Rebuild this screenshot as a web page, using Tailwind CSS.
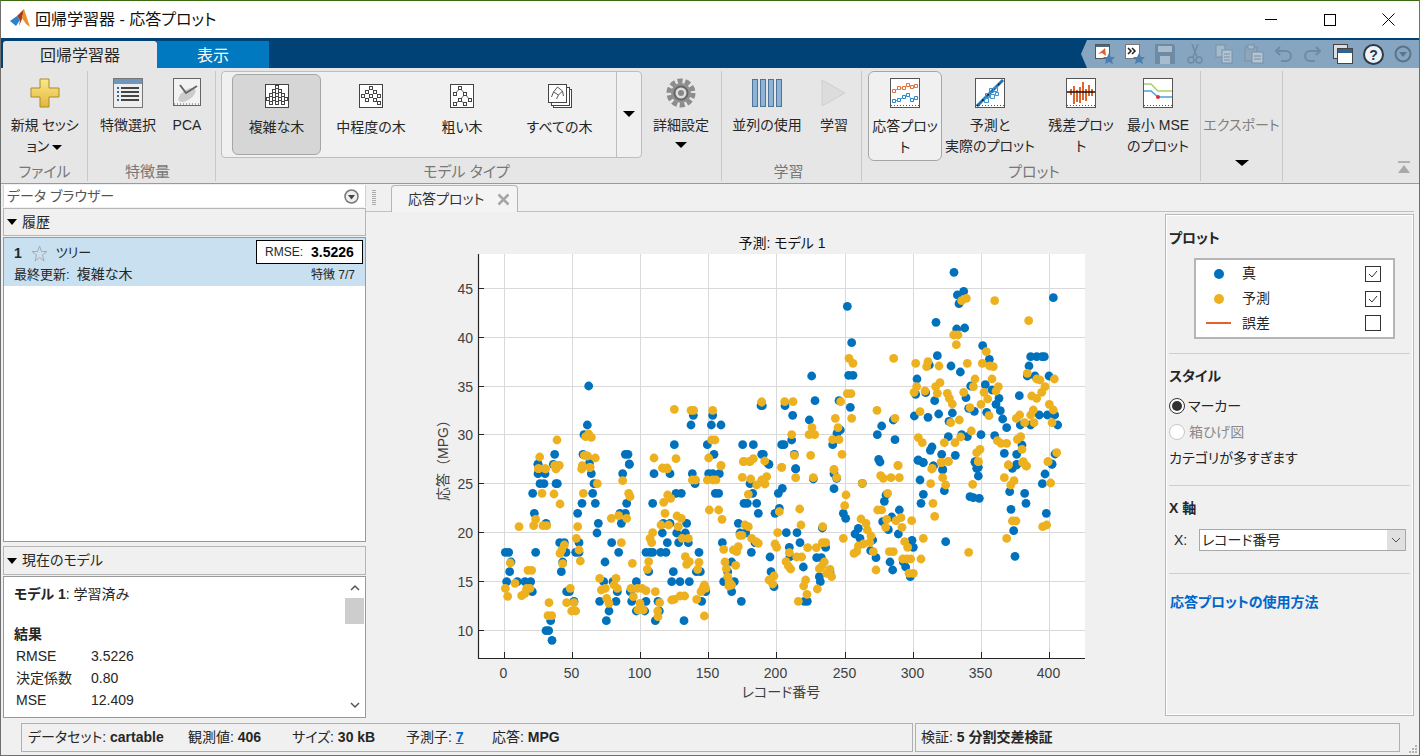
<!DOCTYPE html>
<html lang="ja">

<head>
    <meta charset="UTF-8">
    <title>回帰学習器 - 応答プロット</title>
    <script src="https://cdn.jsdelivr.net/npm/@tailwindcss/browser@4"></script>
</head>

<body class="bg-[#f0f0f0] overflow-hidden">
    <div class="w-[1420px] h-[756px] flex flex-col overflow-hidden bg-[#f0f0f0] border-t border-x border-b border-t-[#3b6a12] border-x-[#6e6e6e] border-b-[#6e6e6e] text-[14px] text-[#262626] [font-family:'Liberation_Sans','Noto_Sans_CJK_JP',sans-serif] [font-feature-settings:'palt']">

        <!-- title bar -->
        <div class="h-[37px] shrink-0 bg-white flex items-center pl-[9px]">
            <svg width="21" height="21" viewBox="0 0 21 21">
                <polygon points="0,12 7,7 10,11 6,17" fill="#2f80c8" />
                <polygon points="7,7 14,0 12,10 9,17 10,11" fill="#a83a1a" />
                <polygon points="14,0 20,18 16,15 12,9" fill="#ef8e2c" />
            </svg>
            <span class="ml-[4px] text-[16px] text-[#111]">回帰学習器 - 応答プロット</span>
            <div class="ml-auto flex items-center">
                <div class="w-[59px] flex justify-center"><div class="w-[12px] h-px bg-black"></div></div>
                <div class="w-[59px] flex justify-center"><div class="w-[12px] h-[12px] border border-black"></div></div>
                <div class="w-[59px] flex justify-center mr-[1px]">
                    <svg width="13" height="13" viewBox="0 0 13 13"><path d="M.5.5l12 12M12.5.5l-12 12" stroke="#000" fill="none" /></svg>
                </div>
            </div>
        </div>

        <!-- ribbon tabs -->
        <div class="h-[30px] shrink-0 bg-[#004275] flex items-end pl-[2px] relative">
            <div class="w-[154px] h-[27px] pt-[2px] bg-[#e6e6e6] rounded-t-[3px] text-[16px] flex items-center justify-center">回帰学習器</div>
            <div class="w-[112px] h-[27px] pt-[2px] bg-[#0079c1] text-white text-[16px] flex items-center justify-center">表示</div>
            <div class="absolute right-0 top-[2px] w-[338px] h-[28px] bg-[#86a5c0] [clip-path:polygon(6px_0,100%_0,100%_100%,6px_100%,0_50%)] flex items-center">
                <div id="quick" class="flex items-center pl-[14px] gap-[10px]">
                    <svg width="20" height="20" viewBox="0 0 20 20"><rect x=".5" y=".5" width="14" height="14" fill="#fff" stroke="#555" /><rect x="1" y="1" width="13" height="2" fill="#4a6a8a" /><polygon points="3,10 8,6 10,4 11,12 7,9" fill="#d9622b" /><polygon points="14,9 16,13 20,13 17,16 18,20 14,18 10,20 11,16 8,13 12,13" fill="#4d7eb0" /></svg>
                    <svg width="20" height="20" viewBox="0 0 20 20"><rect x=".5" y=".5" width="14" height="14" fill="#fff" stroke="#777" /><path d="M3 4l3 3-3 3M7 4l3 3-3 3" stroke="#222" stroke-width="1.500" fill="none" /><polygon points="14,9 16,13 20,13 17,16 18,20 14,18 10,20 11,16 8,13 12,13" fill="#4d7eb0" /></svg>
                    <svg width="20" height="20" viewBox="0 0 20 20"><path d="M0 0h18l2 2v18H0z" fill="#6f8aa3" /><rect x="3" y="2" width="14" height="6" fill="#a8bccd" /><rect x="5" y="12" width="10" height="8" fill="#a8bccd" /></svg>
                    <svg width="20" height="20" viewBox="0 0 20 20"><path d="M13 0L8 13M7 0l5 13" stroke="#6f8aa3" stroke-width="1.500" fill="none" /><circle cx="6" cy="16" r="3" fill="none" stroke="#6f8aa3" stroke-width="1.500" /><circle cx="14" cy="16" r="3" fill="none" stroke="#6f8aa3" stroke-width="1.500" /></svg>
                    <svg width="19" height="20" viewBox="0 0 19 20"><rect x="1" y="1" width="9" height="12" fill="#a5bacb" stroke="#7891a8" /><rect x="7" y="6" width="10" height="13" fill="#b3c4d3" stroke="#7891a8" /><path d="M9 10h6M9 13h6M9 16h6" stroke="#7891a8" /></svg>
                    <svg width="20" height="20" viewBox="0 0 20 20"><rect x="1" y="3" width="12" height="14" fill="#8ea6ba" stroke="#7891a8" /><rect x="4" y="1" width="6" height="4" fill="#a5bacb" stroke="#7891a8" /><rect x="8" y="8" width="11" height="11" fill="#b3c4d3" stroke="#7891a8" /><path d="M10 12h7M10 15h7" stroke="#7891a8" /></svg>
                    <svg width="19" height="20" viewBox="0 0 19 20"><path d="M6 3L2 7l4 4M2 7h10a5 5 0 0 1 0 10H7" stroke="#6f8aa3" stroke-width="2" fill="none" /></svg>
                    <svg width="19" height="20" viewBox="0 0 19 20"><path d="M13 3l4 4-4 4M17 7H7a5 5 0 0 0 0 10h5" stroke="#6f8aa3" stroke-width="2" fill="none" /></svg>
                    <svg class="ml-[1px]" width="20" height="20" viewBox="0 0 20 20"><rect x=".5" y=".5" width="14" height="14" fill="#ddd" stroke="#444" /><rect x="4.500" y="4.500" width="15" height="15" fill="#fff" stroke="#444" /><rect x="5" y="5" width="14" height="4" fill="#33628f" /></svg>
                    <svg width="21" height="21" viewBox="0 0 21 21"><circle cx="10.500" cy="10.500" r="9.500" fill="#eef2f6" stroke="#2d3a46" stroke-width="2" /><text x="10.500" y="15.500" text-anchor="middle" font-size="14" font-weight="700" fill="#1d3550">?</text></svg>
                    <svg width="18" height="18" viewBox="0 0 18 18"><circle cx="9" cy="9" r="7.500" fill="none" stroke="#5d7386" stroke-width="2" /><polygon points="5,7 13,7 9,12" fill="#5d7386" /></svg>
                </div>
            </div>
        </div>

        <!-- ribbon -->
        <div class="h-[115px] shrink-0 bg-[#e6e6e6] flex pt-[3px] pl-px">
            <!-- file -->
            <div class="w-[86px] flex flex-col border-r border-[#c8c8c8] h-[110px]">
                <div class="h-[92px] flex flex-col items-center">
                    <div class="h-[44px] pt-[7px]">
                        <svg width="30" height="30" viewBox="0 0 30 30">
                            <defs><linearGradient id="gold" x1="0" y1="0" x2="0" y2="1"><stop offset="0" stop-color="#fbe98a" /><stop offset="1" stop-color="#e4b638" /></linearGradient></defs>
                            <path d="M10 1h9v9h10v9H19v10h-9V19H1v-9h9z" fill="url(#gold)" stroke="#a98a2c" />
                        </svg>
                    </div>
                    <div class="leading-[21px] text-center tracking-[-0.3px]">新規 セッシ<br>ョン <span class="inline-block w-0 h-0 align-middle border-x-[5px] border-t-[5px] border-x-transparent border-t-black"></span></div>
                </div>
                <div class="h-[18px] leading-[18px] text-center text-[15px] text-[#777]">ファイル</div>
            </div>
            <!-- features -->
            <div class="w-[128px] flex flex-col border-r border-[#c8c8c8] h-[110px]">
                <div class="h-[92px] flex">
                    <div class="w-[80px] flex flex-col items-center">
                        <div class="h-[44px] pt-[7px]">
                            <svg width="30" height="30" viewBox="0 0 30 30"><rect x=".5" y=".5" width="29" height="29" fill="#eee" stroke="#777" /><rect x="1" y="1" width="28" height="5" fill="#6f96bd" /><path d="M8 10h18M8 14h18M8 18h18M8 22h18" stroke="#444" stroke-width="2" /><path d="M4 10h2M4 14h2M4 18h2M4 22h2" stroke="#2d6da8" stroke-width="2" /></svg>
                        </div>
                        <div class="leading-[21px]">特徴選択</div>
                    </div>
                    <div class="w-[38px] flex flex-col items-center">
                        <div class="h-[44px] pt-[7px]">
                            <svg width="28" height="28" viewBox="0 0 28 28"><rect x=".5" y=".5" width="27" height="27" fill="#f2f2f2" stroke="#666" /><ellipse cx="14" cy="17" rx="10" ry="5" transform="rotate(-35 14 17)" fill="#ccc" /><path d="M7 7l6 8 11-7" stroke="#666" stroke-width="2" fill="none" /><path d="M1 26h26" stroke="#666" stroke-dasharray="1 2" /></svg>
                        </div>
                        <div class="leading-[21px]">PCA</div>
                    </div>
                </div>
                <div class="h-[18px] leading-[18px] text-center text-[15px] text-[#777] -ml-[8px]">特徴量</div>
            </div>
            <!-- model type -->
            <div class="w-[506px] flex flex-col border-r border-[#c8c8c8] h-[110px]">
                <div class="h-[92px] flex">
                    <div class="ml-[5px] w-[421px] h-[87px] flex bg-[#f0f0f0] border border-[#bdbdbd] rounded-[4px] pt-[2px]">
                        <div class="ml-[10px] w-[89px] h-[81px] bg-[#d6d6d6] border border-[#a6a6a6] rounded-[6px] flex flex-col items-center pt-[9px]">
                            <svg data-nodes="12,3 9,7 15,7 6,11 12,11 18,11 3,15 9,15 15,15 21,15 6,19 12,19 18,19" width="24" height="24" viewBox="0 0 24 24"><rect x=".5" y=".5" width="23" height="23" fill="#fff" stroke="#444" /></svg>
                            <div class="mt-[9px] leading-[20px]">複雑な木</div>
                        </div>
                        <div class="w-[100px] h-[81px] flex flex-col items-center pt-[10px]">
                            <svg data-nodes="12,4 8,8 16,8 4,12 12,12 20,12 8,16 16,16 20,19" data-links="12,4 8,8 12,4 16,8 8,8 4,12 16,8 12,12 16,8 20,12" width="24" height="24" viewBox="0 0 24 24"><rect x=".5" y=".5" width="23" height="23" fill="#fff" stroke="#444" /></svg>
                            <div class="mt-[9px] leading-[20px]">中程度の木</div>
                        </div>
                        <div class="w-[82px] h-[81px] flex flex-col items-center pt-[10px]">
                            <svg data-nodes="10,4 5,10 15,10 20,16 10,16 5,20 15,20" data-links="10,4 5,10 10,4 15,10 15,10 20,16 15,10 10,16 10,16 5,20 10,16 15,20" width="24" height="24" viewBox="0 0 24 24"><rect x=".5" y=".5" width="23" height="23" fill="#fff" stroke="#444" /></svg>
                            <div class="mt-[9px] leading-[20px]">粗い木</div>
                        </div>
                        <div class="w-[113px] h-[81px] flex flex-col items-center pt-[10px]">
                            <svg width="24" height="24" viewBox="0 0 24 24"><rect x="5.500" y="5.500" width="18" height="18" fill="#fff" stroke="#444" /><rect x="3.500" y="3.500" width="18" height="18" fill="#fff" stroke="#444" /><rect x=".5" y=".5" width="18" height="18" fill="#fff" stroke="#444" /><path d="M9.500 3l-4 5 5 3 4-4zM5.500 8l-2 5M10.500 11l-2 4M14.500 7l1 5" stroke="#555" fill="none" /></svg>
                            <div class="mt-[9px] leading-[20px]">すべての木</div>
                        </div>
                        <div class="w-[25px] h-[85px] -mt-[2px] border-l border-[#bdbdbd] flex items-center justify-center">
                            <div class="w-0 h-0 border-x-[6px] border-t-[6px] border-x-transparent border-t-black mt-[-1px]"></div>
                        </div>
                    </div>
                    <div class="w-[78px] flex flex-col items-center">
                        <div class="h-[44px] pt-[7px]">
                            <svg width="30" height="30" viewBox="0 0 30 30"><circle cx="15" cy="15" r="12" fill="none" stroke="#8c8c8c" stroke-width="5" stroke-dasharray="5 2.540" /><circle cx="15" cy="15" r="10" fill="#8f8f8f" /><circle cx="15" cy="15" r="6.500" fill="#ddd" stroke="#666" stroke-width="2" /><circle cx="15" cy="15" r="3" fill="#888" /></svg>
                        </div>
                        <div class="leading-[21px]">詳細設定</div>
                        <div class="mt-[6px] w-0 h-0 border-x-[6px] border-t-[6px] border-x-transparent border-t-black"></div>
                    </div>
                </div>
                <div class="h-[18px] leading-[18px] text-center text-[15px] text-[#777] -ml-[4px]">モデル タイプ</div>
            </div>
            <!-- train -->
            <div class="w-[140px] flex flex-col border-r border-[#c8c8c8] h-[110px]">
                <div class="h-[92px] flex">
                    <div class="w-[90px] flex flex-col items-center">
                        <div class="h-[44px] pt-[8px] flex gap-[2px]">
                            <div class="w-[6px] h-[28px] bg-[#8bb4d6] border border-[#4f7396]"></div>
                            <div class="w-[6px] h-[28px] bg-[#8bb4d6] border border-[#4f7396]"></div>
                            <div class="w-[6px] h-[28px] bg-[#8bb4d6] border border-[#4f7396]"></div>
                            <div class="w-[6px] h-[28px] bg-[#8bb4d6] border border-[#4f7396]"></div>
                        </div>
                        <div class="leading-[21px]">並列の使用</div>
                    </div>
                    <div class="w-[44px] flex flex-col items-center">
                        <div class="h-[44px] pt-[8px]">
                            <svg width="26" height="28" viewBox="0 0 26 28"><polygon points="1,1 24,14 1,27" fill="#dcdcdc" stroke="#cfcfcf" /></svg>
                        </div>
                        <div class="leading-[21px]">学習</div>
                    </div>
                </div>
                <div class="h-[18px] leading-[18px] text-center text-[15px] text-[#777] -ml-[6px]">学習</div>
            </div>
            <!-- plots -->
            <div class="w-[339px] flex flex-col border-r border-[#c8c8c8] h-[110px]">
                <div class="h-[92px] flex">
                    <div class="ml-[6px] w-[74px] h-[90px] bg-[#f0f0f0] border border-[#a6a6a6] rounded-[6px] flex flex-col items-center">
                        <div class="h-[44px] pt-[6px]">
                            <svg width="30" height="30" viewBox="0 0 30 30"><rect x=".5" y=".5" width="29" height="29" fill="#fff" stroke="#555" /><path d="M4 13l5-3 5 0 4-3 4 2 4-1" stroke="#e68a62" fill="none" /><path d="M2.500 11.500h3v3h-3zM7.500 8.500h3v3h-3zM12.500 8.500h3v3h-3zM16.500 5.500h3v3h-3zM20.500 7.500h3v3h-3zM24.500 6.500h3v3h-3z" fill="#fff" stroke="#e0703e" /><path d="M4 23l5-1 5-3 4-2 4 5 4-2" stroke="#5aa2d8" fill="none" /><path d="M2.500 21.500h3v3h-3zM7.500 20.500h3v3h-3zM12.500 17.500h3v3h-3zM16.500 15.500h3v3h-3zM20.500 20.500h3v3h-3zM24.500 18.500h3v3h-3z" fill="#fff" stroke="#2e86c8" /><path d="M1 27.500h28" stroke="#555" stroke-dasharray="1 2" /></svg>
                        </div>
                        <div class="leading-[21px] text-center">応答プロッ<br>ト</div>
                    </div>
                    <div class="w-[96px] flex flex-col items-center">
                        <div class="h-[44px] pt-[7px]">
                            <svg width="30" height="30" viewBox="0 0 30 30"><rect x=".5" y=".5" width="29" height="29" fill="#fff" stroke="#555" /><path d="M2 28L28 2" stroke="#2273b5" stroke-width="3" /><path d="M2 28L28 2" stroke="#111" stroke-width="1.500" stroke-dasharray="1.500 6" /><path d="M10.500 15.500h4v4h-4zM14.500 10.500h4v4h-4zM18.500 9.500h4v4h-4zM15.500 16.500h4v4h-4zM9.500 20.500h4v4h-4zM20.500 14.500h3v3h-3z" stroke="#3b93d3" fill="none" /><path d="M1 27.500h28" stroke="#555" stroke-dasharray="1 2" /></svg>
                        </div>
                        <div class="leading-[21px] text-center whitespace-nowrap">予測と<br>実際のプロット</div>
                    </div>
                    <div class="w-[86px] flex flex-col items-center">
                        <div class="h-[44px] pt-[7px]">
                            <svg width="30" height="30" viewBox="0 0 30 30"><rect x=".5" y=".5" width="29" height="29" fill="#fff" stroke="#555" /><path d="M5 11v6M8 8v18M11 12v12M14 9v16M17 4v18M20 11v12M23 7v11M26 11v7" stroke="#e0642c" stroke-width="2" fill="none" /><path d="M1 14h28" stroke="#111" stroke-width="1.500" /><path d="M1 27.500h28" stroke="#555" stroke-dasharray="1 2" /></svg>
                        </div>
                        <div class="leading-[21px] text-center">残差プロッ<br>ト</div>
                    </div>
                    <div class="w-[68px] flex flex-col items-center">
                        <div class="h-[44px] pt-[7px]">
                            <svg width="30" height="30" viewBox="0 0 30 30"><rect x=".5" y=".5" width="29" height="29" fill="#fff" stroke="#555" /><path d="M1 6h7l7 7h14" stroke="#a5d46a" stroke-width="1.500" fill="none" /><path d="M1 13h7l7 6h14" stroke="#4aa3dc" stroke-width="1.500" fill="none" /><circle cx="15" cy="19" r="2" fill="#d6303a" /><path d="M1 27.500h28" stroke="#555" stroke-dasharray="1 2" /></svg>
                        </div>
                        <div class="leading-[21px] text-center whitespace-nowrap">最小 MSE<br>のプロット</div>
                    </div>
                </div>
                <div class="h-[18px] leading-[18px] text-center text-[15px] text-[#777] ml-[6px]">プロット</div>
            </div>
            <!-- export -->
            <div class="w-[82px] flex flex-col items-center border-r border-[#c8c8c8] h-[110px]">
                <div class="mt-[44px] leading-[21px] text-[#808080] whitespace-nowrap">エクスポート</div>
                <div class="mt-[24px] w-0 h-0 border-x-[7px] border-t-[6px] border-x-transparent border-t-black"></div>
            </div>
            <div class="flex-1 flex justify-end items-end pb-[7px] pr-[8px] h-[110px]">
                <svg width="14" height="13" viewBox="0 0 14 13"><path d="M1 1h12" stroke="#b0b0b0" stroke-width="2" /><polygon points="7,4 13,12 1,12" fill="#a8a8a8" /></svg>
            </div>
        </div>
        <div class="h-px shrink-0 bg-[#9a9a9a]"></div>

        <!-- main -->
        <div class="flex-1 min-h-0 flex">
            <!-- left column -->
            <div class="w-[365px] shrink-0 pl-[2px] pt-px flex flex-col">
                <div class="h-[22px] bg-white border-x border-[#d0d0d0] flex items-center pl-[3px] pr-[6px] text-[#555]">
                    データ ブラウザー
                    <svg class="ml-auto" width="15" height="15" viewBox="0 0 15 15"><circle cx="7.500" cy="7.500" r="6.500" fill="#eee" stroke="#777" stroke-width="1.500" /><polygon points="4,6 11,6 7.500,10.500" fill="#444" /></svg>
                </div>
                <div class="mt-px h-[28px] border border-[#b5b5b5] flex items-center pl-[3px] bg-[#f0f0f0]">
                    <span class="w-0 h-0 border-x-[5px] border-t-[6px] border-x-transparent border-t-black"></span>
                    <span class="ml-[5px]">履歴</span>
                </div>
                <div class="mt-px h-[305px] border border-[#999] bg-white">
                    <div class="h-[48px] bg-[#c8e0ef] relative px-[10px] pt-[4px]">
                        <div class="flex items-center h-[22px]">
                            <b class="font-bold">1</b>
                            <svg class="ml-[9px]" width="17" height="17" viewBox="0 0 17 17"><polygon points="8.500,1 10.500,6.500 16,6.500 11.500,10 13,16 8.500,12.500 4,16 5.500,10 1,6.500 6.500,6.500" fill="none" stroke="#aaa" /></svg>
                            <span class="ml-[8px] text-[13px]">ツリー</span>
                        </div>
                        <div class="text-[13px] leading-[22px] -mt-px">最終更新:&nbsp; <span class="text-[14px]">複雑な木</span></div>
                        <div class="absolute right-[2px] top-[2px] w-[107px] h-[24px] bg-white border border-black flex items-center pl-[8px] gap-[8px] text-[12px]">
                            RMSE: <b class="text-[14px] font-bold text-black">3.5226</b>
                        </div>
                        <div class="absolute right-[10px] top-[27px] text-[12px] leading-[20px]">特徴 7/7</div>
                    </div>
                </div>
                <div class="mt-[4px] h-[29px] border border-[#b5b5b5] flex items-center pl-[3px] bg-[#f0f0f0]">
                    <span class="w-0 h-0 border-x-[5px] border-t-[6px] border-x-transparent border-t-black"></span>
                    <span class="ml-[5px]">現在のモデル</span>
                </div>
                <div class="mt-px h-[142px] border border-[#999] bg-white flex overflow-hidden">
                    <div class="flex-1 pl-[10px] pt-[7px] text-[14px]">
                        <div class="leading-[20px]"><b class="font-bold">モデル 1</b>: 学習済み</div>
                        <div class="mt-[20px] leading-[20px] font-bold">結果</div>
                        <div class="grid grid-cols-[75px_1fr] pl-[2px] leading-[22px] mt-[1px]">
                            <span>RMSE</span><span>3.5226</span>
                            <span>決定係数</span><span>0.80</span>
                            <span>MSE</span><span>12.409</span>
                        </div>
                    </div>
                    <div class="w-[19px] mr-px flex flex-col items-center bg-white">
                        <svg class="mt-[7px]" width="10" height="7" viewBox="0 0 10 7"><path d="M1 6l4-4 4 4" stroke="#555" stroke-width="1.500" fill="none" /></svg>
                        <div class="mt-[7px] w-[19px] h-[26px] bg-[#cdcdcd]"></div>
                        <svg class="mt-auto mb-[8px]" width="10" height="7" viewBox="0 0 10 7"><path d="M1 1l4 4 4-4" stroke="#555" stroke-width="1.500" fill="none" /></svg>
                    </div>
                </div>
            </div>

            <!-- center -->
            <div class="flex-1 min-w-0 flex flex-col">
                <div class="h-[28px] shrink-0 flex pl-[25px] pt-px border-b border-[#c0c0c0] relative">
                    <div class="absolute left-[6px] top-[6px] w-[4px] h-[16px] bg-[repeating-linear-gradient(#aaa_0_1px,transparent_1px_2px)]"></div>
                    <div class="w-[127px] h-[27px] bg-[#f4f4f4] border border-b-0 border-[#b5b5b5] rounded-t-[4px] flex items-center pl-[16px] pr-[7px] text-[#333]">
                        応答プロット
                        <svg class="ml-auto" width="13" height="13" viewBox="0 0 13 13"><path d="M1.500 1.500l10 10M11.500 1.500l-10 10" stroke="#a6a6a6" stroke-width="2.500" /></svg>
                    </div>
                </div>
                <div class="flex-1 flex min-h-0">
                    <!-- plot -->
                    <svg id="plot" class="block shrink-0" width="799" height="510" viewBox="366 212 799 510" font-family="'Liberation Sans','Noto Sans CJK JP',sans-serif">
                        <rect x="478" y="254" width="607" height="404" fill="#fff" />
                        <g id="grid" stroke="#d9d9d9"></g>
                        <g id="marks"></g>
                        <path d="M478.500 254V658.500H1085" fill="none" stroke="#262626" stroke-width="1.200" />
                        <g id="ticks" stroke="#262626"></g>
                        <g id="labels" fill="#404040" font-size="14"></g>
                        <text x="782" y="248" text-anchor="middle" font-size="14" fill="#111">予測: モデル 1</text>
                        <text x="781" y="697" text-anchor="middle" font-size="14" fill="#404040">レコード番号</text>
                        <text class="[font-feature-settings:normal]" transform="translate(448 457) rotate(-90)" text-anchor="middle" font-size="14" fill="#404040">応答（MPG）</text>
                    </svg>

                    <!-- right panel -->
                    <div class="w-[249px] h-[502px] mt-[2px] border border-[#b8b8b8] shadow-[inset_0_0_0_1px_#fff] px-[3px] shrink-0">
                        <div class="mt-[13px] font-bold leading-[20px]">プロット</div>
                        <div class="ml-[25px] mt-[10px] w-[201px] h-[81px] bg-white border-2 border-[#b5b5b5] grid grid-cols-[46px_1fr_28px] grid-rows-[25px_25px_24px] items-center pt-px">
                            <div class="justify-self-center w-[10px] h-[10px] rounded-full bg-[#0072bd]"></div>
                            <span>真</span>
                            <div class="w-[16px] h-[16px] bg-white border border-[#333] flex items-center justify-center"><svg width="12" height="12" viewBox="0 0 12 12"><path d="M2 6l3 3 5-6" stroke="#333" fill="none" /></svg></div>
                            <div class="justify-self-center w-[10px] h-[10px] rounded-full bg-[#edb120]"></div>
                            <span>予測</span>
                            <div class="w-[16px] h-[16px] bg-white border border-[#333] flex items-center justify-center"><svg width="12" height="12" viewBox="0 0 12 12"><path d="M2 6l3 3 5-6" stroke="#333" fill="none" /></svg></div>
                            <div class="justify-self-center ml-[-2px] w-[25px] h-[2px] bg-[#e0622d]"></div>
                            <span>誤差</span>
                            <div class="w-[16px] h-[16px] bg-white border border-[#333]"></div>
                        </div>
                        <div class="mt-[14px] h-px bg-[#cfcfcf]"></div>
                        <div class="mt-[12px] font-bold leading-[20px]">スタイル</div>
                        <div class="mt-[10px] flex items-center h-[20px]">
                            <span class="w-[16px] h-[16px] rounded-full border border-[#333] bg-white flex items-center justify-center"><span class="w-[10px] h-[10px] rounded-full bg-[#333]"></span></span>
                            <span class="ml-[3px]">マーカー</span>
                        </div>
                        <div class="mt-[6px] flex items-center h-[20px] text-[#8a8a8a]">
                            <span class="w-[16px] h-[16px] rounded-full border border-[#c8c8c8] bg-white"></span>
                            <span class="ml-[4px]">箱ひげ図</span>
                        </div>
                        <div class="mt-[6px] leading-[20px]">カテゴリが多すぎます</div>
                        <div class="mt-[17px] h-px bg-[#cfcfcf]"></div>
                        <div class="mt-[12px] font-bold leading-[20px]">X 軸</div>
                        <div class="mt-[11px] flex items-center">
                            <span class="ml-[5px] w-[25px]">X:</span>
                            <div class="w-[207px] h-[22px] bg-white border border-[#a8a8a8] flex items-center pl-[2px]">
                                レコード番号
                                <div class="ml-auto w-[18px] h-full bg-[#e0e0e0] flex items-center justify-center"><svg width="10" height="6" viewBox="0 0 10 6"><path d="M1 1l4 4 4-4" stroke="#555" fill="none" /></svg></div>
                            </div>
                        </div>
                        <div class="mt-[22px] h-px bg-[#cfcfcf]"></div>
                        <div class="mt-[18px] pl-px font-bold leading-[20px] text-[#0066cc]">応答プロットの使用方法</div>
                    </div>
                </div>
            </div>
            <div class="w-[5px] shrink-0"></div>
        </div>

        <!-- status bar -->
        <div class="h-[33px] shrink-0 flex pl-[20px] pt-[1px] relative">
            <div class="w-[892px] h-[29px] border border-[#b0b0b0] flex items-center pl-[6px] whitespace-nowrap text-[14px]">
                <span class="w-[160px]">データセット: <b class="font-bold">cartable</b></span>
                <span class="w-[104px]">観測値: <b class="font-bold">406</b></span>
                <span class="w-[114px]">サイズ: <b class="font-bold">30 kB</b></span>
                <span class="w-[86px]">予測子: <b class="font-bold text-[#0066cc] underline">7</b></span>
                <span>応答: <b class="font-bold">MPG</b></span>
            </div>
            <div class="ml-[2px] w-[485px] h-[29px] border border-[#b0b0b0] flex items-center pl-[5px]">
                <span>検証: <b class="font-bold">5 分割交差検証</b></span>
            </div>
            <svg class="absolute right-[1px] bottom-[1px]" width="9" height="9" viewBox="0 0 9 9"><path d="M6 0h2v2H6zM3 3h2v2H3zM6 3h2v2H6zM0 6h2v2H0zM3 6h2v2H3zM6 6h2v2H6z" fill="#b5b5a5" /></svg>
        </div>
    </div>

    <script>
        const NS = 'http://www.w3.org/2000/svg';

        function add(parent, tag, attrs, text) {
            const el = document.createElementNS(NS, tag);
            for (const k in attrs) el.setAttribute(k, attrs[k]);
            if (text !== undefined) el.textContent = text;
            parent.appendChild(el);
            return el;
        }

        // tree icons
        document.querySelectorAll('svg[data-nodes]').forEach(svg => {
            const links = (svg.dataset.links || '').split(' ').filter(Boolean).map(p => p.split(',').map(Number));
            for (let i = 0; i + 1 < links.length; i += 2) {
                add(svg, 'line', { x1: links[i][0], y1: links[i][1], x2: links[i + 1][0], y2: links[i + 1][1], stroke: '#666' });
            }
            svg.dataset.nodes.split(' ').forEach(p => {
                const [x, y] = p.split(',').map(Number);
                add(svg, 'rect', { x: x - 1.5, y: y - 1.5, width: 3, height: 3, fill: '#fff', stroke: '#444' });
            });
        });

        // axes
        const grid = document.getElementById('grid');
        const ticks = document.getElementById('ticks');
        const labels = document.getElementById('labels');
        [0, 50, 100, 150, 200, 250, 300, 350, 400].forEach((v, i) => {
            const x = Math.floor(504.5 + i * 68.1) + 0.5;
            add(grid, 'line', { x1: x, x2: x, y1: 254, y2: 658 });
            add(ticks, 'line', { x1: x, x2: x, y1: 658, y2: 652 });
            add(labels, 'text', { x: x - 1, y: 678, 'text-anchor': 'middle' }, v);
        });
        [10, 15, 20, 25, 30, 35, 40, 45].forEach((v, i) => {
            const y = Math.round(630 - i * 48.9) + 0.5;
            add(grid, 'line', { x1: 478, x2: 1085, y1: y, y2: y });
            add(ticks, 'line', { x1: 478, x2: 484, y1: y, y2: y });
            add(labels, 'text', { x: 473, y: y + 5, 'text-anchor': 'end' }, v);
        });

        // scatter points, read per region of the plot
        const regions = [
            { ox: 430, oy: 230,
              blue: '476,468 472,585 462,614 459,673 374,673 324,703 370,703 586,673 594,673 598,703 733,644 783,585 790,556 848,556 844,585 873,585 832,644 852,673 938,644 970,644 993,527 478,700 995,673',
              gold: '329,681 381,630 374,706 385,706 467,620 476,612 484,622 463,676 473,678 496,684 457,707 480,712 672,684 733,538 783,541 791,541 848,541 845,630 855,630 836,684 873,706 738,686 942,694 958,694 970,686 995,516 697,714 711,714 325,716 345,716' },
            { ox: 430, oy: 460,
              blue: '324,12 324,41 345,41 330,71 342,71 378,71 382,71 308,100 313,160 348,190 317,277 226,277 236,277 243,306 239,335 230,365 262,365 285,365 302,365 307,395 348,512 356,512 362,482 366,541 389,248 403,248 408,277 398,306 394,335 410,395 418,395 432,424 443,160 456,130 488,100 496,130 484,41 492,71 505,190 501,219 447,248 437,277 447,277 525,306 509,424 537,453 529,482 521,365 545,248 566,277 558,424 562,395 549,365 570,160 586,160 574,190 590,130 578,41 598,12 619,365 601,395 605,424 644,453 619,453 648,424 656,335 668,130 672,41 648,277 660,277 668,277 692,277 708,277 712,248 697,219 700,190 720,190 720,41 676,482 688,453 684,424 730,335 725,365 750,365 738,100 754,100 740,219 746,248 770,190 766,219 775,248 778,365 762,482 807,277 799,335 811,335 815,424 827,395 787,41 795,71 836,41 848,41 868,41 856,100 866,100 877,248 881,365 893,335 905,306 913,365 905,395 934,424 925,190 930,219 947,219 964,277 942,130 952,130 960,71 968,100 980,130 985,160 975,248',
              gold: '326,26 347,27 378,27 388,16 336,100 372,102 390,132 317,178 311,197 339,197 350,197 267,200 241,309 294,331 305,331 226,385 233,409 255,370 275,407 290,385 300,385 285,400 357,428 354,467 365,467 403,255 390,280 398,311 395,270 421,385 410,428 432,428 425,453 437,453 455,27 480,22 502,71 460,100 443,200 439,235 447,270 451,303 509,355 514,390 526,385 530,415 537,430 558,355 552,375 562,385 544,175 566,167 590,175 578,62 596,100 600,110 574,248 607,310 603,385 622,385 610,410 636,385 648,392 630,430 640,450 624,450 700,25 712,27 701,127 713,105 722,115 705,160 693,195 716,195 741,168 754,175 745,200 668,218 660,235 665,248 656,305 652,328 676,395 689,428 683,453 684,470 733,418 725,420 750,408 764,408 757,235 775,235 766,290 778,305 770,313 803,328 807,307 823,375 819,385 827,385 813,395 800,418 823,468 838,150 866,150 876,178 787,60 797,60 832,60 848,60 858,60 873,18 881,268 885,306 889,326 893,350 897,365 905,375 896,378 917,316 910,270 920,275 925,260 930,226 936,226 945,195 955,200 965,235 978,245 985,250 955,103 962,57 937,52 980,75 940,5 960,5' },
            { ox: 760, oy: 230,
              blue: '7,527 75,527 98,556 148,570 165,512 155,438 262,229 275,338 266,436 279,436 237,512 271,532 241,600 231,610 218,644 95,630 65,644 72,644 10,673 103,673 27,703 107,716 365,588 352,614 405,629 400,570 356,688 360,696 463,558 504,562 536,552 471,447 467,493 497,488 524,512 532,377 508,405 573,408 601,426 582,127 592,195 611,184 597,221 528,277 590,297 614,294 668,347 688,388 632,468 676,464 696,480 618,503 626,535 643,544 577,549 567,574 605,614 622,620 663,614 565,620 704,617 717,505 708,523 721,542 728,567 740,593 680,547 778,497 781,585 812,585 838,555 862,555 884,555 893,585 867,438 880,203 807,408 812,380 830,380 846,380 853,380 802,438 825,438 786,645 770,673 733,670 516,651 511,661 545,673 586,676 474,691 489,697 520,708 548,718 645,697 655,712 770,705 876,703 885,672',
              gold: '5,516 74,515 99,515 156,593 147,614 164,614 95,614 218,629 237,629 234,593 226,565 242,515 262,491 273,491 275,565 267,385 279,400 351,541 405,565 401,385 467,400 504,395 500,410 537,408 622,400 704,212 605,212 619,205 581,315 594,315 589,344 679,365 667,400 700,410 689,408 806,272 696,447 645,447 640,470 715,470 708,483 683,507 672,487 611,487 540,458 527,470 532,490 562,490 568,505 577,522 462,487 470,470 495,483 480,545 663,523 630,533 687,557 598,570 572,578 634,603 602,621 585,638 553,638 475,623 487,638 712,632 723,640 740,640 769,565 779,555 794,578 822,578 812,555 820,540 830,505 815,498 845,487 855,470 883,447 830,447 840,450 802,430 868,523 880,540 876,578 782,620 772,628 786,658 660,658 650,668 655,695 543,697 565,694 517,715 414,707 246,673 152,676 103,676 14,693 65,712 222,718 745,705 790,695 800,708 864,695 890,668' },
            { ox: 760, oy: 460,
              blue: '25,12 107,27 222,41 230,55 222,86 67,85 55,100 58,145 45,160 79,218 111,218 120,248 88,262 90,290 30,291 33,335 42,380 130,321 160,57 187,204 170,293 184,293 178,350 181,365 210,336 197,262 142,424 133,424 250,160 257,175 307,70 378,105 373,124 395,171 418,150 368,185 385,209 415,222 295,205 285,222 300,235 338,240 332,272 348,293 390,306 398,330 437,321 430,306 451,350 456,241 460,262 480,60 490,103 483,130 520,18 548,30 553,92 475,0 490,8 557,245 630,110 640,113 658,115 655,48 650,25 645,5 757,25 770,13 749,95 753,148 761,212 765,289 794,100 798,130 847,71 855,42 859,160 876,12',
              gold: '65,22 107,53 160,53 222,30 230,53 5,60 20,50 15,72 58,155 119,147 123,195 53,218 45,252 50,262 88,278 110,291 125,291 143,263 169,263 188,200 187,248 197,248 78,305 85,318 92,327 193,306 178,326 186,318 210,328 200,340 215,350 137,360 131,378 172,387 141,403 115,424 27,360 42,348 38,372 258,105 254,137 250,235 307,70 303,177 318,190 322,210 333,228 329,248 310,252 295,258 282,280 290,275 340,275 348,330 353,150 365,150 362,47 370,55 393,53 418,53 414,16 383,100 380,178 377,202 408,182 423,173 426,202 455,182 434,245 443,262 490,235 388,275 400,275 428,297 440,297 452,297 483,297 447,340 460,340 519,130 524,169 512,71 515,27 548,53 557,75 545,8 565,5 638,73 626,277 655,5 733,53 745,15 752,75 762,62 740,235 757,183 768,183 788,8 798,18 872,69 864,5 848,200 860,195' }
        ];

        const marks = document.getElementById('marks');
        function drawPoints(key, color) {
            regions.forEach(r => {
                r[key].split(' ').forEach(p => {
                    const [x, y] = p.split(',').map(Number);
                    add(marks, 'circle', { cx: r.ox + x / 3, cy: r.oy + y / 3, r: 4.4, fill: color });
                });
            });
        }
        drawPoints('blue', '#0072bd');
        drawPoints('gold', '#edb120');
    </script>
</body>

</html>
